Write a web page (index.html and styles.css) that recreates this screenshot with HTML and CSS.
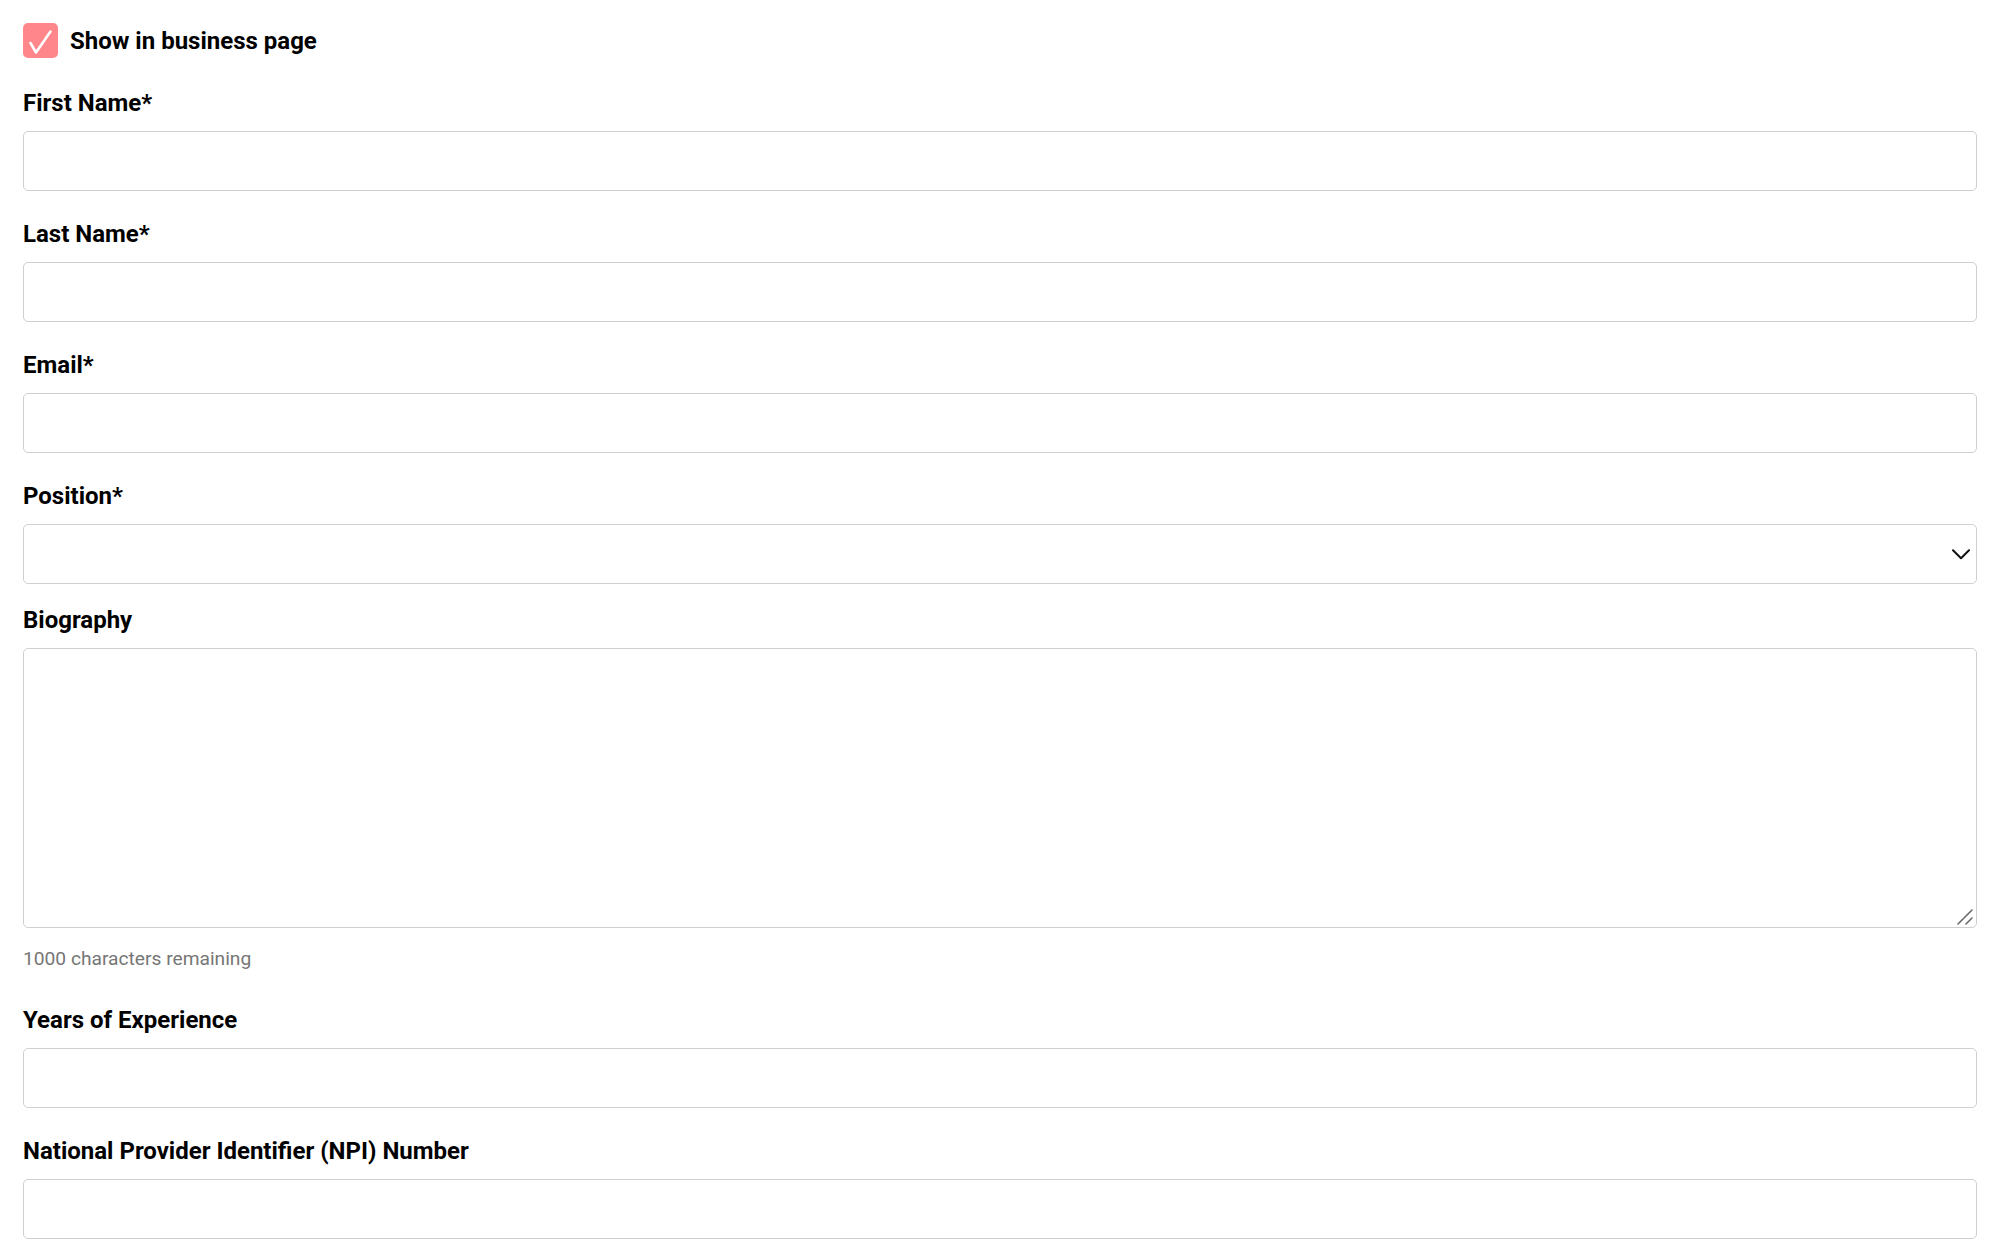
FILE: index.html
```html
<!DOCTYPE html>
<html lang="en">
<head>
<meta charset="utf-8">
<title>Team member</title>
<link rel="stylesheet" href="styles.css">
</head>
<body>
<form class="form">
  <label class="check-row">
    <span class="check-box">
      <svg viewBox="0 0 35 35" width="35" height="35" aria-hidden="true"><path d="M7.5 20 L13 29.5 L27.5 8.5" fill="none" stroke="#fff" stroke-width="2.6" stroke-linecap="round" stroke-linejoin="round"/></svg>
    </span>
    <span class="check-text">Show in business page</span>
  </label>

  <div class="field">
    <label class="label">First Name*</label>
    <input class="input" type="text">
  </div>

  <div class="field">
    <label class="label">Last Name*</label>
    <input class="input" type="text">
  </div>

  <div class="field">
    <label class="label">Email*</label>
    <input class="input" type="email">
  </div>

  <div class="field field-select">
    <label class="label">Position*</label>
    <div class="control-wrap">
      <select class="input select"><option></option></select>
      <svg class="chevron" viewBox="0 0 18 11" width="18" height="11" aria-hidden="true"><path d="M1 1.2 L9 9.2 L17 1.2" fill="none" stroke="#111" stroke-width="2" stroke-linecap="round" stroke-linejoin="round"/></svg>
    </div>
  </div>

  <div class="field field-textarea">
    <label class="label">Biography</label>
    <div class="control-wrap">
      <textarea class="input textarea"></textarea>
      <svg class="grip" viewBox="0 0 16 16" width="16" height="16" aria-hidden="true"><path d="M1 15 L15 1 M9 15 L15 9" fill="none" stroke="#6b6b6b" stroke-width="1.6" stroke-linecap="round"/></svg>
    </div>
    <div class="hint">1000 characters remaining</div>
  </div>

  <div class="field">
    <label class="label">Years of Experience</label>
    <input class="input" type="text">
  </div>

  <div class="field">
    <label class="label">National Provider Identifier (NPI) Number</label>
    <input class="input" type="text">
  </div>
</form>
</body>
</html>
```

FILE: styles.css
```css
* { box-sizing: border-box; }

html, body {
  margin: 0;
  background: #fff;
}

body {
  padding: 23px 27.5px 0 23px;
  font-family: Roboto, "Liberation Sans", Arial, sans-serif;
  color: #000;
}

.form {
  display: flex;
  flex-direction: column;
}

.check-row {
  display: flex;
  align-items: center;
  gap: 12px;
  height: 35px;
  margin-bottom: 31px;
}

.check-box {
  width: 35px;
  height: 35px;
  border-radius: 5px;
  background: #ff878c;
  display: flex;
}

.check-text {
  font-size: 24px;
  line-height: 28px;
  font-weight: 700;
}

.field {
  display: flex;
  flex-direction: column;
  margin-bottom: 29.5px;
}

.field-select {
  margin-bottom: 22.5px;
}

.label {
  font-size: 24px;
  line-height: 28px;
  font-weight: 700;
  margin-bottom: 13.5px;
}

.input {
  display: block;
  width: 100%;
  height: 60px;
  border: 1px solid #cfcfcf;
  border-radius: 5px;
  background: #fff;
  font-family: inherit;
  font-size: 20px;
  padding: 0 16px;
  outline: none;
}

.control-wrap {
  position: relative;
}

.select {
  appearance: none;
  -webkit-appearance: none;
}

.chevron {
  position: absolute;
  right: 7px;
  top: 25px;
  pointer-events: none;
}

.textarea {
  height: 280px;
  padding: 12px 16px;
  resize: none;
}

.grip {
  position: absolute;
  right: 4px;
  bottom: 3px;
  pointer-events: none;
}

.hint {
  margin-top: 20px;
  font-size: 19.2px;
  line-height: 22px;
  color: #767676;
  margin-bottom: 7px;
}
```
